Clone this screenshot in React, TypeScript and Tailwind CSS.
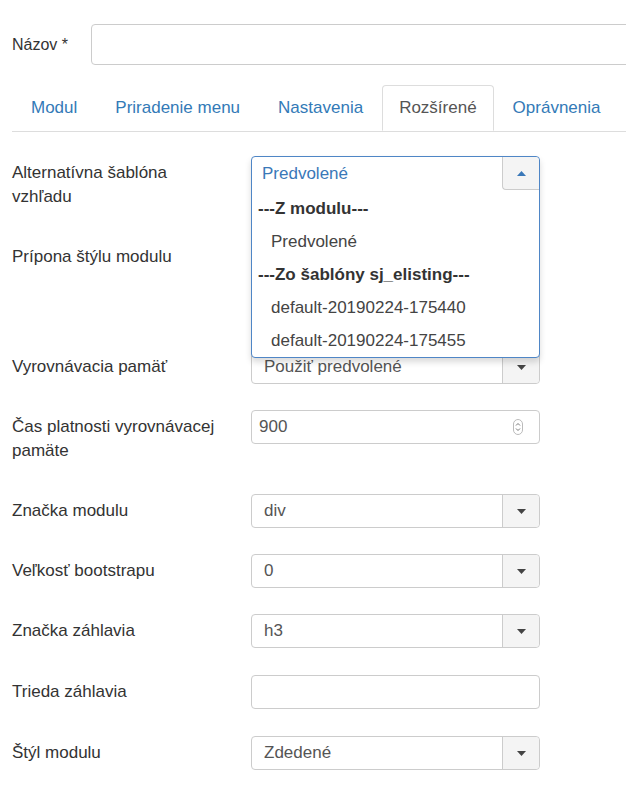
import React from 'react';

const tabs = ['Modul', 'Priradenie menu', 'Nastavenia', 'Rozšírené', 'Oprávnenia'];

function Caret({ up = false, color = '#444' }: { up?: boolean; color?: string }) {
  return (
    <svg width="9" height="5" viewBox="0 0 9 5">
      {up ? <path d="M0 5 L4.5 0 L9 5 Z" fill={color} /> : <path d="M0 0 L9 0 L4.5 5 Z" fill={color} />}
    </svg>
  );
}

function SelectBox({ value }: { value: string }) {
  return (
    <div className="flex h-[34px] w-[289px] rounded-[4px] border border-[#ccc] bg-white">
      <div className="flex flex-1 items-center pl-[12px] text-[#555]">{value}</div>
      <div className="flex w-[37px] items-center justify-center rounded-r-[4px] border-l border-[#ccc] bg-[#f4f4f4]">
        <Caret />
      </div>
    </div>
  );
}

function TextBox({ value = '', spinner = false }: { value?: string; spinner?: boolean }) {
  return (
    <div className="flex h-[34px] w-[289px] items-center rounded-[4px] border border-[#ccc] bg-white pl-[7px] pr-[16px] text-[#555]">
      <span className="flex-1">{value}</span>
      {spinner && (
        <svg width="10" height="16" viewBox="0 0 10 16">
          <rect x="0.5" y="0.5" width="9" height="15" rx="4.5" fill="none" stroke="#bbb" />
          <path d="M3 6.5 L5 4.5 L7 6.5" fill="none" stroke="#777" strokeWidth="1" />
          <path d="M3 9.5 L5 11.5 L7 9.5" fill="none" stroke="#777" strokeWidth="1" />
        </svg>
      )}
    </div>
  );
}

function Row({ label, children, gap = 'mb-[26px]' }: { label: React.ReactNode; children: React.ReactNode; gap?: string }) {
  return (
    <div className={`${gap} flex items-start`}>
      <div className="w-[239px] shrink-0 py-[5px] pr-[20px] leading-6 text-[#333]">{label}</div>
      {children}
    </div>
  );
}

export default function App() {
  return (
    <div
      className="relative h-[799px] w-[626px] overflow-hidden bg-white text-[17px]"
      style={{ fontFamily: '"Liberation Sans", Arial, sans-serif' }}
    >
      {/* Názov */}
      <div className="flex items-center pl-[12px] pt-[24px]">
        <label className="w-[79px] shrink-0 text-[16px] text-[#333]">Názov *</label>
        <div className="h-[41px] w-[560px] shrink-0 rounded-[4px] border border-[#ccc] bg-white" />
      </div>

      {/* Záložky */}
      <div className="ml-[12px] mt-[20px] flex border-b border-[#ddd]">
        {tabs.map(t =>
          t === 'Rozšírené' ? (
            <div
              key={t}
              className="-mb-px flex h-[46px] items-center rounded-t-[4px] border border-[#ddd] border-b-white bg-white px-[16px] text-[#555]"
            >
              {t}
            </div>
          ) : (
            <div key={t} className="flex h-[46px] items-center px-[19px] text-[#337ab7]">
              {t}
            </div>
          )
        )}
      </div>

      {/* Formulár */}
      <div className="relative pl-[12px] pt-[24px]">
        <Row label={<>Alternatívna šablóna<br />vzhľadu</>}>
          {/* miesto pod otvoreným zoznamom */}
          <div className="h-[34px] w-[289px]" />
        </Row>
        <Row label="Prípona štýlu modulu">
          <div className="h-[84px] w-[289px] rounded-[4px] border border-[#ccc]" />
        </Row>
        <Row label="Vyrovnávacia pamäť">
          <SelectBox value="Použiť predvolené" />
        </Row>
        <Row label={<>Čas platnosti vyrovnávacej<br />pamäte</>}>
          <TextBox value="900" spinner />
        </Row>
        <Row label="Značka modulu">
          <SelectBox value="div" />
        </Row>
        <Row label="Veľkosť bootstrapu">
          <SelectBox value="0" />
        </Row>
        <Row label="Značka záhlavia" gap="mb-[27px]">
          <SelectBox value="h3" />
        </Row>
        <Row label="Trieda záhlavia" gap="mb-[27px]">
          <TextBox />
        </Row>
        <Row label="Štýl modulu">
          <SelectBox value="Zdedené" />
        </Row>

        {/* Otvorený rozbaľovací zoznam */}
        <div className="absolute left-[251px] top-[24px] w-[289px] rounded-[4px] border border-[#4f86c6] bg-white shadow-[0_4px_6px_rgba(0,0,0,0.15)]">
          <div className="flex h-[33px]">
            <div className="flex flex-1 items-center pl-[10px] text-[#3a78b8]">Predvolené</div>
            <div className="flex w-[37px] items-center justify-center rounded-bl-[4px] rounded-tr-[4px] border-b border-l border-[#ccc] bg-[#f4f4f4]">
              <Caret up color="#3a78b8" />
            </div>
          </div>
          <div className="pt-[2px]">
            <div className="flex h-[33px] items-center pl-[6px] font-bold text-[#333]">---Z modulu---</div>
            <div className="flex h-[33px] items-center pl-[19px] text-[#444]">Predvolené</div>
            <div className="flex h-[33px] items-center pl-[6px] font-bold text-[#333]">---Zo šablóny sj_elisting---</div>
            <div className="flex h-[33px] items-center pl-[19px] text-[#444]">default-20190224-175440</div>
            <div className="flex h-[33px] items-center pl-[19px] text-[#444]">default-20190224-175455</div>
          </div>
        </div>
      </div>
    </div>
  );
}
